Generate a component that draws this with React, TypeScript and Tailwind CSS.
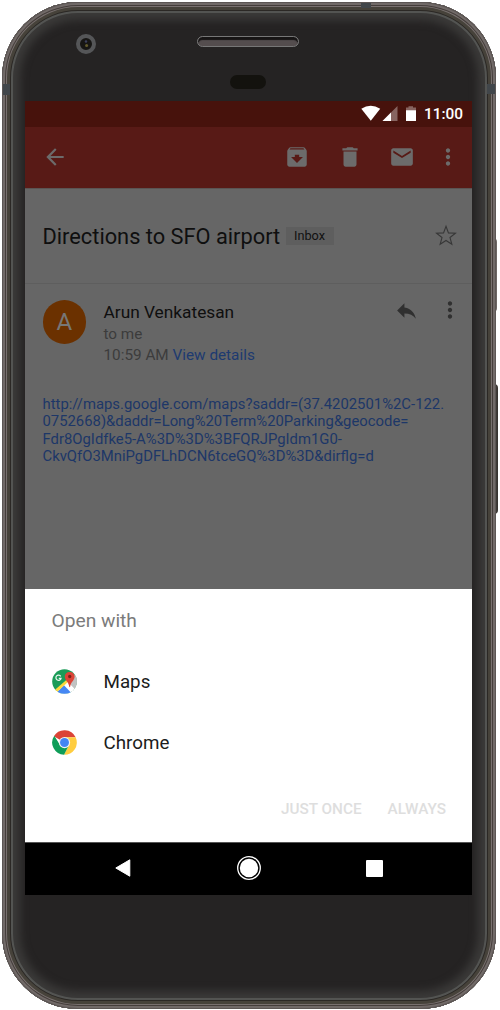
import React from "react";

function MaterialIcon({ d, className }: { d: string; className: string }) {
  return (
    <svg viewBox="0 0 24 24" className={className} fill="currentColor">
      <path d={d} />
    </svg>
  );
}

const paths = {
  back: "M20 11H7.83l5.59-5.59L12 4l-8 8 8 8 1.41-1.41L7.83 13H20v-2z",
  archive:
    "M20.54 5.23l-1.39-1.68C18.88 3.21 18.47 3 18 3H6c-.47 0-.88.21-1.16.55L3.46 5.23C3.17 5.57 3 6.02 3 6.5V19c0 1.1.9 2 2 2h14c1.1 0 2-.9 2-2V6.5c0-.48-.17-.93-.46-1.27zM12 17.5L6.5 12H10v-2h4v2h3.5L12 17.5zM5.12 5l.81-1h12l.94 1H5.12z",
  trash:
    "M6 19c0 1.1.9 2 2 2h8c1.1 0 2-.9 2-2V7H6v12zM19 4h-3.5l-1-1h-5l-1 1H5v2h14V4z",
  mail: "M20 4H4c-1.1 0-1.99.9-1.99 2L2 18c0 1.1.9 2 2 2h16c1.1 0 2-.9 2-2V6c0-1.1-.9-2-2-2zm0 4l-8 5-8-5V6l8 5 8-5v2z",
  more: "M12 8c1.1 0 2-.9 2-2s-.9-2-2-2-2 .9-2 2 .9 2 2 2zm0 2c-1.1 0-2 .9-2 2s.9 2 2 2 2-.9 2-2-.9-2-2-2zm0 6c-1.1 0-2 .9-2 2s.9 2 2 2 2-.9 2-2-.9-2-2-2z",
  reply: "M10 9V5l-7 7 7 7v-4.1c5 0 8.5 1.6 11 5.1-1-5-4-10-11-11z",
};

function StatusBar() {
  return (
    <div className="flex h-[26px] shrink-0 items-center bg-[#47120c] pl-[336px] text-white">
      <svg viewBox="0 0 56 17" className="mt-[-1px] h-[17px] w-[56px]">
        <path d="M0.3 3.8Q9.7 -2.4 19.2 3.8L9.8 15.8Z" fill="#fff" />
        <path d="M36.5 1V16H21.5Z" fill="#fff" fillOpacity=".35" />
        <path d="M30 7.5V16H21.5Z" fill="#fff" />
        <path d="M47.5 1.2h4.5v1.3h3V5.2h-10V2.500h2.500z" fill="#fff" fillOpacity=".35" />
        <path d="M45 5.200h10v10.800h-10z" fill="#fff" />
      </svg>
      <span className="ml-[7px] mt-[2px] text-[15.400px] leading-none font-medium">11:00</span>
    </div>
  );
}

function Toolbar() {
  return (
    <div className="flex h-[61px] shrink-0 items-center bg-[#581a16] pb-[2px] pl-[17px] text-[#6c6b6b]">
      <MaterialIcon d={paths.back} className="size-[26px]" />
      <MaterialIcon d={paths.archive} className="ml-[216px] size-[26px]" />
      <MaterialIcon d={paths.trash} className="ml-[26.500px] size-[26px]" />
      <MaterialIcon d={paths.mail} className="ml-[26.500px] size-[26px]" />
      <MaterialIcon d={paths.more} className="ml-[20px] size-[26px]" />
    </div>
  );
}

function Message() {
  return (
    <div className="flex h-[401px] shrink-0 flex-col bg-[#666]">
      <div className="flex h-[96px] shrink-0 items-center border-t border-b border-t-[#5b5453] border-b-[#5e5e5e] pl-[17.500px]">
        <h1 className="mt-[2px] w-[243px] whitespace-nowrap text-[21.800px] leading-[26px] text-[#0f0f0f]">
          Directions to SFO airport
        </h1>
        <span className="flex h-[18px] w-[48px] items-center justify-center bg-[#5e5e5e] pt-px text-[12.700px] leading-none text-[#111]">
          Inbox
        </span>
        <svg viewBox="0 0 24 24" className="ml-[100px] size-[24px]" fill="none" stroke="#373737" strokeWidth="1.100">
          <path d="M12 2.300l2.450 6.550 7 .3-5.450 4.400 1.850 6.750-5.850-3.850-5.850 3.850L8 13.550 2.550 9.150l7-.3z" />
        </svg>
      </div>
      <div className="flex pt-[16px] pl-[17.500px]">
        <div className="flex size-[43.500px] shrink-0 items-center justify-center rounded-full bg-[#6b3100] pt-px text-[24px] text-[#777]">
          A
        </div>
        <div className="ml-[17.500px] w-[279px] whitespace-nowrap">
          <div className="text-[17.300px] leading-[24px] text-[#0f0f0f]">Arun Venkatesan</div>
          <div className="text-[15.300px] leading-[21px] text-[#3c3c3c]">to me</div>
          <div className="text-[15.300px] leading-[21px] text-[#3c3c3c]">
            10:59 AM <span className="text-[#1d3a70]">View details</span>
          </div>
        </div>
        <MaterialIcon d={paths.reply} className="mt-[-2px] ml-[11.500px] size-[25px] text-[#303030]" />
        <MaterialIcon d={paths.more} className="mt-[-3px] ml-[18px] size-[26px] text-[#303030]" />
      </div>
      <p className="mt-[30px] pl-[17.500px] text-[14.850px] leading-[17.400px] whitespace-nowrap text-[#1d3768]">
        http://maps.google.com/maps?saddr=(37.4202501%2C-122.
        <br />
        0752668)&amp;daddr=Long%20Term%20Parking&amp;geocode=
        <br />
        Fdr8OgIdfke5-A%3D%3D%3BFQRJPgIdm1G0-
        <br />
        CkvQfO3MniPgDFLhDCN6tceGQ%3D%3D&amp;dirflg=d
      </p>
    </div>
  );
}

function MapsIcon() {
  return (
    <svg viewBox="0 0 24 24" className="mt-[-1px] size-[25px]">
      <defs>
        <clipPath id="maps-disc">
          <circle cx="12" cy="12" r="11.800" />
        </clipPath>
      </defs>
      <g clipPath="url(#maps-disc)">
        <path d="M0 0h24v24H0z" fill="#1b9c58" />
        <path d="M16 10L24 4V24H19L13 14z" fill="#c2c2c2" />
        <path d="M12 14.500L15 12L24 21V24H4L3 22z" fill="#fff" />
        <path d="M15 12L24 21V8L20 6z" fill="#c2c2c2" />
        <path d="M11.500 15.500L19.500 24H3z" fill="#4687f4" />
        <path d="M14 10.200L1.500 21.200 3.800 23 15 12.800z" fill="#fcd83e" />
      </g>
      <path d="M8.400 7.100A2.500 2.500 0 1 0 8.700 8.900H6.500" fill="none" stroke="#e9f5ee" strokeWidth="1.200" />
      <path
        d="M17 2.800c-2.700 0-4.700 2-4.700 4.500 0 4 3.600 4.700 4.300 9.800.1.600.7.600.8 0 .7-5.100 4.300-5.800 4.300-9.800 0-2.500-2-4.500-4.700-4.500z"
        fill="#dc4437"
      />
      <circle cx="17" cy="7.200" r="1.600" fill="#7a2119" />
    </svg>
  );
}

function ChromeIcon() {
  return (
    <svg viewBox="0 0 24 24" className="size-[25px]">
      <path d="M12 12L1.780 6.100A11.800 11.800 0 0 1 22.700 7H12z" fill="#db4437" />
      <path d="M12 7H22.700A11.800 11.800 0 0 1 11.600 23.800L16.330 14.500z" fill="#ffcd40" />
      <path d="M7.670 14.500L2.200 5.400A11.800 11.800 0 0 0 11.600 23.800L16.330 14.500z" fill="#0f9d58" />
      <circle cx="12" cy="12" r="5.400" fill="#f1f1f1" />
      <circle cx="12" cy="12" r="4.300" fill="#4285f4" />
    </svg>
  );
}

function ChooserSheet() {
  return (
    <div className="flex h-[253px] shrink-0 flex-col bg-white pl-[26.500px] text-[#1c1c1c]">
      <div className="pt-[19px] text-[19.200px] leading-[25px] text-[#7b7b7b]">Open with</div>
      <div className="mt-[18px] flex h-[61px] items-center text-[18.800px]">
        <MapsIcon />
        <span className="mt-[2px] ml-[27px]">Maps</span>
      </div>
      <div className="flex h-[61px] items-center text-[18.800px]">
        <ChromeIcon />
        <span className="mt-[2px] ml-[27px]">Chrome</span>
      </div>
      <div className="mt-[25px] flex justify-end pr-[26px] text-[15.300px] leading-[23px] font-medium text-[#dedede]">
        <span>JUST ONCE</span>
        <span className="ml-[26px]">ALWAYS</span>
      </div>
    </div>
  );
}

function NavigationBar() {
  return (
    <div className="flex h-[52.500px] shrink-0 items-center border-t border-[#555] bg-black pb-px pl-[89px]">
      <svg viewBox="0 0 18 20" className="h-[20px] w-[18px]">
        <path d="M1.800 10L15.800 1.800V18.200Z" fill="#fff" stroke="#fff" strokeWidth="1" strokeLinejoin="round" />
      </svg>
      <svg viewBox="0 0 26 26" className="ml-[103.500px] size-[26px]">
        <circle cx="13" cy="13" r="11.300" fill="none" stroke="#fff" strokeWidth="1.300" />
        <circle cx="13" cy="13" r="9.200" fill="#fff" />
      </svg>
      <div className="ml-[104px] size-[17px] rounded-[1px] bg-white" />
    </div>
  );
}

export default function App() {
  return (
    <div className="relative h-[1010px] w-[500px] overflow-hidden bg-white font-['Roboto',sans-serif]">
      <div className="absolute top-[238px] left-[493px] h-[74px] w-[4px] rounded-r-[4px] bg-gradient-to-r from-[#35302e] to-[#77706e]" />
      <div className="absolute top-[384px] left-[493px] h-[130px] w-[5px] rounded-r-[4px] bg-gradient-to-r from-[#55504b] to-[#35312e]" />
      <div className="relative ml-[1.500px] flex h-[1010px] w-[494px] flex-col pt-[1.500px]">
        <div className="h-[1007px] w-[494px] rounded-[76px] bg-[#252323] pt-[99.500px] pl-[23.500px] shadow-[inset_0_0_0_1px_#5c5654,inset_0_0_0_3px_#716a68,inset_0_0_0_4px_#453e3b,inset_0_0_0_5px_#78706f,inset_0_0_0_8px_#46423a,inset_0_0_0_9px_#2b2825,inset_0_0_0_11px_#535452,inset_0_0_8px_18px_#3b3a39]">
          <div className="flex w-[447px] flex-col overflow-hidden">
            <StatusBar />
            <Toolbar />
            <Message />
            <ChooserSheet />
            <NavigationBar />
          </div>
        </div>
      </div>
      <div className="absolute top-[84px] left-[2.500px] h-[11px] w-[7px] bg-[#41464a]" />
      <div className="absolute top-[84px] left-[487px] h-[10px] w-[8px] bg-[#41464a]" />
      <div className="absolute top-[3px] left-[361px] h-[5px] w-[10px] bg-[#41464a]" />
      <div className="absolute top-[34px] left-[76px] flex size-[20px] items-center justify-center rounded-full border-[4.500px] border-[#555658] bg-[#171614]">
        <svg viewBox="0 0 8 10" className="h-[10px] w-[8px]">
          <circle cx="4" cy="2.500" r="1.200" fill="#3c3f5c" />
          <circle cx="4.600" cy="6.500" r="1.500" fill="#625a2c" />
        </svg>
      </div>
      <div className="absolute top-[36px] left-[197px] h-[11px] w-[102px] rounded-full border border-[#777] bg-[#544d4e] shadow-[inset_0_3px_1px_#171515]" />
      <div className="absolute top-[75px] left-[230px] h-[14px] w-[36px] rounded-full bg-[#13120e]" />
    </div>
  );
}
